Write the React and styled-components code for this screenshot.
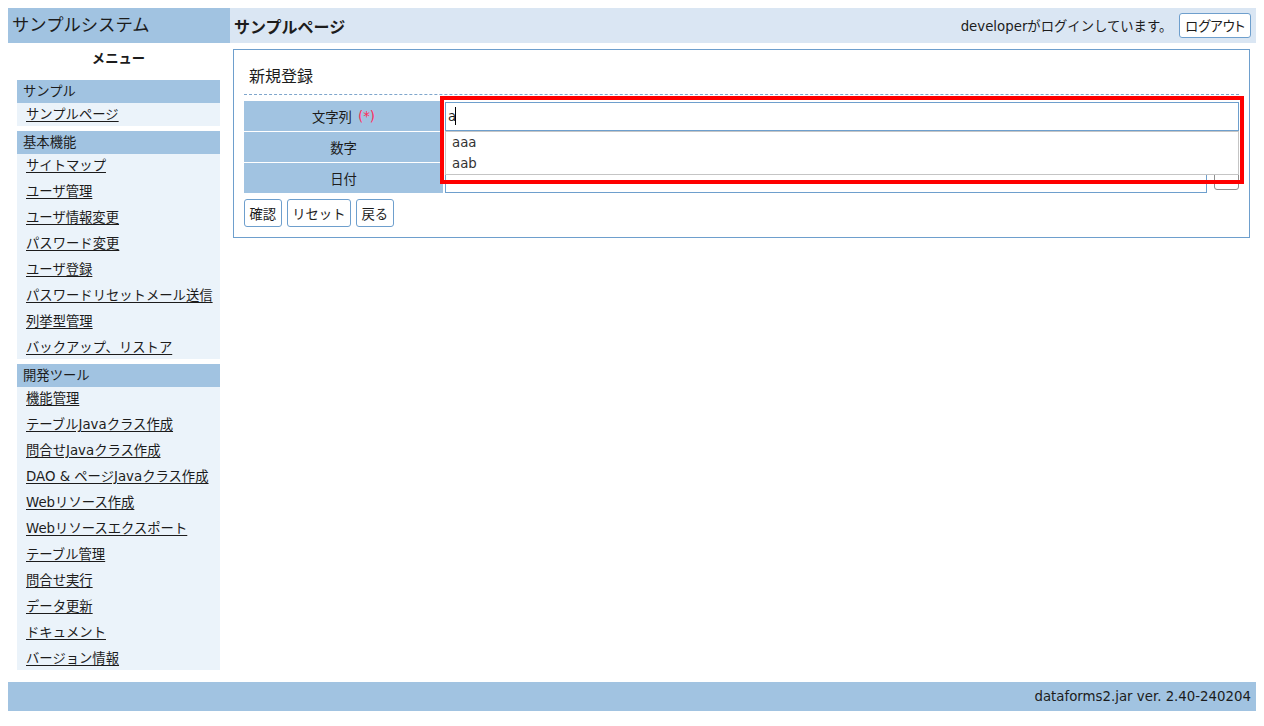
import React from 'react'
import styled, {createGlobalStyle} from 'styled-components'

const GlobalStyle = createGlobalStyle`
body {
  margin: 8px;
  font-family: "DejaVu Sans", "Noto Sans CJK JP", sans-serif;
  font-size: 13.33px;
  color: #1c1c1c;
  background: #fff;
}
`

const Page = styled.div`
width: 1248px;
`

const Header = styled.header`
display: grid;
grid-template-columns: 222px 1fr;
height: 35px;
`

const SystemTitle = styled.div`
background: #a1c3e1;
font-size: 17.33px;
line-height: 35px;
padding-left: 4px;
`

const PageBar = styled.div`
background: #dae6f3;
display: flex;
align-items: center;
justify-content: space-between;
padding: 0 5px 0 4px;
`

const PageTitle = styled.h1`
margin: 0;
font-size: 16px;
font-weight: bold;
`

const UserBox = styled.div`
display: flex;
align-items: center;
gap: 7px;
`

const Button = styled.button`
font: inherit;
font-size: 13.33px;
font-feature-settings: ${p => p.$tight ? '"palt"' : 'normal'};
color: #1c1c1c;
background: #fff;
border: 1px solid #6e9fcd;
border-radius: 3px;
height: ${p => p.$h || 28}px;
padding: 0 ${p => p.$px || 4.5}px;
cursor: pointer;
`

const Body = styled.div`
display: grid;
grid-template-columns: 222px 1fr;
align-items: start;
`

const Sidebar = styled.nav`
padding: 6px 10px 0 9px;
`

const MenuTitle = styled.div`
text-align: center;
font-weight: bold;
line-height: 20px;
margin-bottom: 11px;
`

const Group = styled.div`
& + & {
  margin-top: 5px;
}
`

const GroupHeader = styled.div`
background: #a1c3e1;
height: 23px;
line-height: 23px;
padding-left: 6px;
`

const Items = styled.ul`
list-style: none;
margin: 0;
padding: 0 0 0 9px;
background: #ebf3fa;
display: flex;
flex-direction: column;
gap: 3px;
`

const Item = styled.li`
line-height: 23px;
height: 23px;
a {
  color: #1c1c1c;
  text-decoration: underline;
  text-underline-offset: 2px;
}
`

const Main = styled.main`
padding: 6px 6px 0 3px;
`

const Panel = styled.section`
border: 1px solid #6e9fcd;
padding: 0 10px 10px;
`

const FormTitle = styled.h2`
margin: 0 0 6px;
padding: 16px 5px 0;
height: 28px;
font-size: 16px;
font-weight: normal;
line-height: 22px;
border-bottom: 1px dashed #7fa6cc;
`

const FormTable = styled.div`
position: relative;
display: grid;
grid-template-columns: 199px 1fr;
grid-auto-rows: 30px;
column-gap: 2px;
row-gap: 1px;
`

const Label = styled.div`
background: #a1c3e1;
display: flex;
align-items: center;
justify-content: center;
gap: 6px;
padding-top: 1px;
`

const Required = styled.span`
color: #ff2a5a;
`

const Value = styled.div`
display: flex;
align-items: ${p => p.$align || 'center'};
gap: 7px;
`

const TextInput = styled.input`
box-sizing: border-box;
font: inherit;
font-size: 13.33px;
color: #1c1c1c;
height: ${p => p.$h || 29}px;
width: ${p => p.$w ? p.$w + 'px' : '100%'};
border: 1px solid #6e9fcd;
padding: 0 2px;
margin: 0;
outline: none;
`

const CalendarButton = styled.button`
box-sizing: border-box;
width: 25px;
height: 27px;
border: 1px solid #8f8f8f;
border-radius: 3px;
background: #fff;
padding: 0;
`

const Caret = styled.span`
position: absolute;
left: 211px;
top: 6px;
width: 1px;
height: 18px;
background: #000;
`

const Suggestions = styled.ul`
position: absolute;
top: 30px;
left: 201px;
width: 794px;
box-sizing: border-box;
margin: 0;
padding: 0;
list-style: none;
background: #fff;
border: 1px solid #c5c5c5;
`

const Suggestion = styled.li`
height: 21px;
line-height: 21px;
padding-left: 6px;
color: #333;
`

const Highlight = styled.div`
position: absolute;
top: -5px;
left: 196px;
width: 804px;
height: 88px;
box-sizing: border-box;
border: 4px solid #ff0000;
pointer-events: none;
`

const Actions = styled.div`
display: flex;
gap: 5px;
margin-top: 6px;
`

const Footer = styled.footer`
margin-top: 12px;
background: #a1c3e1;
height: 29px;
line-height: 30px;
text-align: right;
padding-right: 5px;
`

const menu = [
  {title: 'サンプル', items: ['サンプルページ']},
  {title: '基本機能', items: ['サイトマップ', 'ユーザ管理', 'ユーザ情報変更', 'パスワード変更', 'ユーザ登録', 'パスワードリセットメール送信', '列挙型管理', 'バックアップ、リストア']},
  {title: '開発ツール', items: ['機能管理', 'テーブルJavaクラス作成', '問合せJavaクラス作成', 'DAO & ページJavaクラス作成', 'Webリソース作成', 'Webリソースエクスポート', 'テーブル管理', '問合せ実行', 'データ更新', 'ドキュメント', 'バージョン情報']},
]

export default function App() {
  return <Page>
    <GlobalStyle />
    <Header>
      <SystemTitle>サンプルシステム</SystemTitle>
      <PageBar>
        <PageTitle>サンプルページ</PageTitle>
        <UserBox>
          <span>developerがログインしています。</span>
          <Button $h={25} $px={5} $tight>ログアウト</Button>
        </UserBox>
      </PageBar>
    </Header>
    <Body>
      <Sidebar>
        <MenuTitle>メニュー</MenuTitle>
        {menu.map(group => <Group key={group.title}>
          <GroupHeader>{group.title}</GroupHeader>
          <Items>
            {group.items.map(item => <Item key={item}><a href="#">{item}</a></Item>)}
          </Items>
        </Group>)}
      </Sidebar>
      <Main>
        <Panel>
          <FormTitle>新規登録</FormTitle>
          <FormTable>
            <Label>文字列<Required>(*)</Required></Label>
            <Value $align="flex-end"><TextInput defaultValue="a" /></Value>
            <Label>数字</Label>
            <Value><TextInput /></Value>
            <Label>日付</Label>
            <Value $align="flex-start">
              <TextInput $h={30} $w={762} />
              <CalendarButton />
            </Value>
            <Caret />
            <Suggestions>
              <Suggestion>aaa</Suggestion>
              <Suggestion>aab</Suggestion>
            </Suggestions>
            <Highlight />
          </FormTable>
          <Actions>
            <Button>確認</Button>
            <Button>リセット</Button>
            <Button>戻る</Button>
          </Actions>
        </Panel>
      </Main>
    </Body>
    <Footer>dataforms2.jar ver. 2.40-240204</Footer>
  </Page>
}
